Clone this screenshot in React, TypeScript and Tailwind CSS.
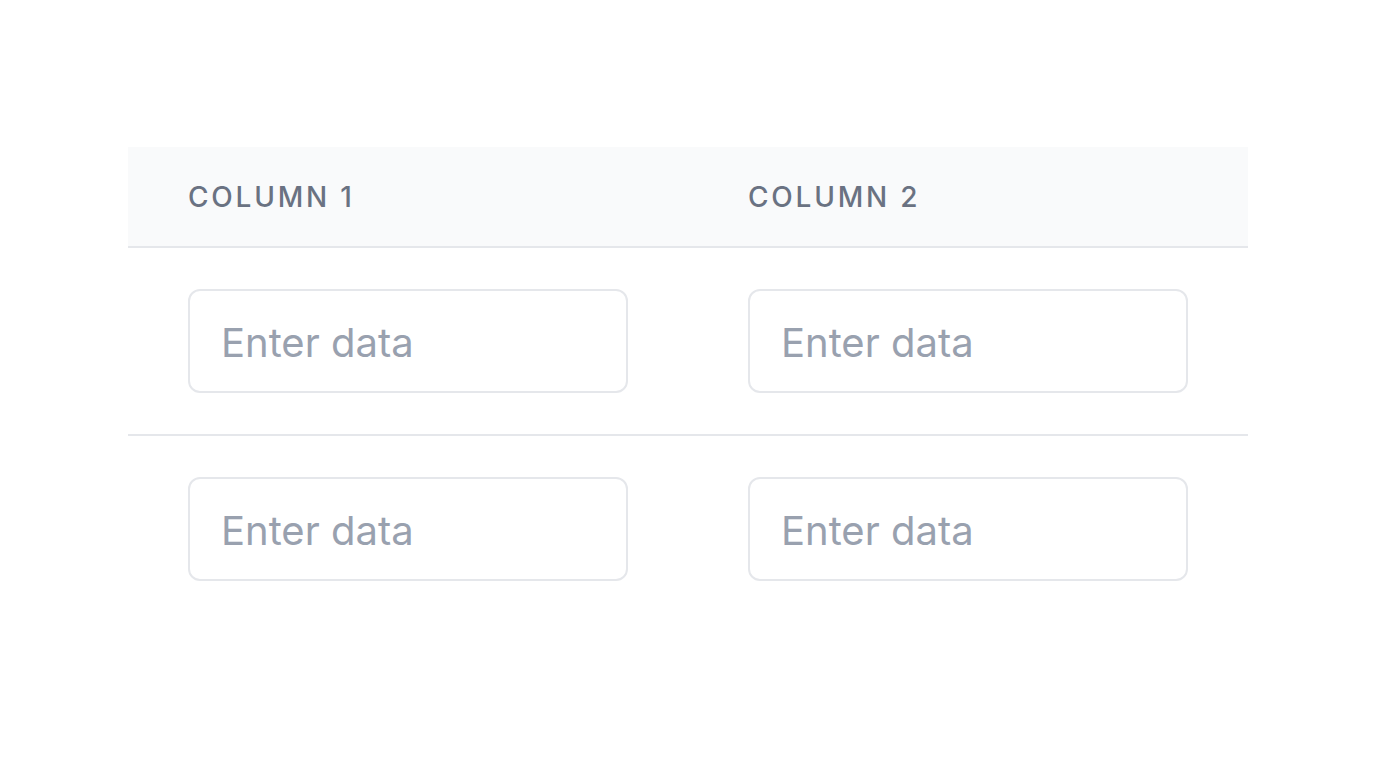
export default function App() {
  const rows = [0, 1];
  return (
    <div className="min-h-screen bg-white pt-[147px] font-['Inter',sans-serif]">
      <div className="mx-[128px] w-[1120px]">
        {/* Header */}
        <div className="grid h-[101px] grid-cols-2 border-b-2 border-gray-200 bg-gray-50">
          <div className="flex items-center px-[60px] text-[28px] font-medium uppercase tracking-widest text-gray-500">
            Column 1
          </div>
          <div className="flex items-center px-[60px] text-[28px] font-medium uppercase tracking-widest text-gray-500">
            Column 2
          </div>
        </div>

        {/* Rows */}
        {rows.map((r, i) => (
          <div
            key={r}
            className={
              i < rows.length - 1
                ? "grid grid-cols-2 border-b-2 border-gray-200"
                : "grid grid-cols-2"
            }
          >
            <div className="px-[60px] py-[41px]">
              <input
                type="text"
                placeholder="Enter data"
                className="h-[104px] w-full rounded-xl border-2 border-gray-200 pl-[31px] pr-[32px] pt-[2px] text-[40px] text-gray-700 placeholder:text-gray-400 outline-none"
              />
            </div>
            <div className="px-[60px] py-[41px]">
              <input
                type="text"
                placeholder="Enter data"
                className="h-[104px] w-full rounded-xl border-2 border-gray-200 pl-[31px] pr-[32px] pt-[2px] text-[40px] text-gray-700 placeholder:text-gray-400 outline-none"
              />
            </div>
          </div>
        ))}
      </div>
    </div>
  );
}
